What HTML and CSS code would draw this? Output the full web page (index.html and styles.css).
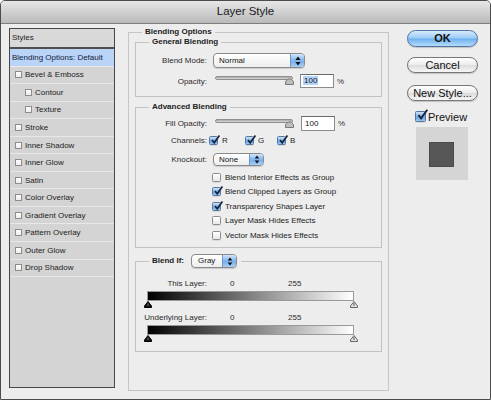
FILE: index.html
```html
<!DOCTYPE html>
<html>
<head>
<meta charset="utf-8">
<title>Layer Style</title>
<link rel="stylesheet" href="styles.css">
</head>
<body>
<div class="window">
  <div class="titlebar">Layer Style</div>
  <div class="content">
    <ul class="styles-list">
      <li class="styles-head">Styles</li>
      <li class="item selected">Blending Options: Default</li>
      <li class="item"><span class="sbox"></span>Bevel &amp; Emboss</li>
      <li class="item sub"><span class="sbox"></span>Contour</li>
      <li class="item sub"><span class="sbox"></span>Texture</li>
      <li class="item"><span class="sbox"></span>Stroke</li>
      <li class="item"><span class="sbox"></span>Inner Shadow</li>
      <li class="item"><span class="sbox"></span>Inner Glow</li>
      <li class="item"><span class="sbox"></span>Satin</li>
      <li class="item"><span class="sbox"></span>Color Overlay</li>
      <li class="item"><span class="sbox"></span>Gradient Overlay</li>
      <li class="item"><span class="sbox"></span>Pattern Overlay</li>
      <li class="item"><span class="sbox"></span>Outer Glow</li>
      <li class="item"><span class="sbox"></span>Drop Shadow</li>
    </ul>

    <div class="main">
      <fieldset class="group outer">
        <legend>Blending Options</legend>
        <div class="outer-body">
          <fieldset class="group general">
            <legend>General Blending</legend>
            <div class="row r-mode">
              <span class="lbl">Blend Mode:</span>
              <div class="popup p-mode"><span class="popup-text">Normal</span><span class="popup-arrows"><svg viewBox="0 0 6 10" width="6" height="10"><path d="M3 0.5 L5.6 4 L0.4 4 Z M3 9.5 L5.6 6 L0.4 6 Z" fill="#111"/></svg></span></div>
            </div>
            <div class="row r-opacity">
              <span class="lbl">Opacity:</span>
              <div class="slider">
                <div class="track"></div>
                <svg class="thumb" viewBox="0 0 9 8" width="9" height="8"><path d="M0.5 7.5 L0.5 4.5 Q4.5 -1 8.5 4.5 L8.5 7.5 Z" fill="#bdbdbd" stroke="#777" stroke-width="1"/></svg>
              </div>
              <div class="num"><span class="sel">100</span></div>
              <span class="pct">%</span>
            </div>
          </fieldset>

          <fieldset class="group advanced">
            <legend>Advanced Blending</legend>
            <div class="row r-fill">
              <span class="lbl">Fill Opacity:</span>
              <div class="slider">
                <div class="track"></div>
                <svg class="thumb" viewBox="0 0 9 8" width="9" height="8"><path d="M0.5 7.5 L0.5 4.5 Q4.5 -1 8.5 4.5 L8.5 7.5 Z" fill="#bdbdbd" stroke="#777" stroke-width="1"/></svg>
              </div>
              <div class="num num-fill"><span>100</span></div>
              <span class="pct">%</span>
            </div>
            <div class="row r-chan">
              <span class="lbl lbl-chan">Channels:</span>
              <span class="chan chan-r"><span class="cb on"><svg viewBox="0 0 10 10" width="10" height="10"><path d="M2 5 L4.2 7.8 L9.4 0.6" fill="none" stroke="#16253d" stroke-width="1.7"/></svg></span>R</span>
              <span class="chan chan-g"><span class="cb on"><svg viewBox="0 0 10 10" width="10" height="10"><path d="M2 5 L4.2 7.8 L9.4 0.6" fill="none" stroke="#16253d" stroke-width="1.7"/></svg></span>G</span>
              <span class="chan"><span class="cb on"><svg viewBox="0 0 10 10" width="10" height="10"><path d="M2 5 L4.2 7.8 L9.4 0.6" fill="none" stroke="#16253d" stroke-width="1.7"/></svg></span>B</span>
            </div>
            <div class="row r-knock">
              <span class="lbl">Knockout:</span>
              <div class="popup p-knock"><span class="popup-text">None</span><span class="popup-arrows"><svg viewBox="0 0 6 10" width="6" height="9"><path d="M3 0.5 L5.6 4 L0.4 4 Z M3 9.5 L5.6 6 L0.4 6 Z" fill="#111"/></svg></span></div>
            </div>
            <ul class="checks">
              <li><span class="cb"></span>Blend Interior Effects as Group</li>
              <li><span class="cb on"><svg viewBox="0 0 10 10" width="10" height="10"><path d="M2 5 L4.2 7.8 L9.4 0.6" fill="none" stroke="#16253d" stroke-width="1.7"/></svg></span>Blend Clipped Layers as Group</li>
              <li><span class="cb on"><svg viewBox="0 0 10 10" width="10" height="10"><path d="M2 5 L4.2 7.8 L9.4 0.6" fill="none" stroke="#16253d" stroke-width="1.7"/></svg></span>Transparency Shapes Layer</li>
              <li><span class="cb"></span>Layer Mask Hides Effects</li>
              <li><span class="cb"></span>Vector Mask Hides Effects</li>
            </ul>
          </fieldset>

          <fieldset class="group blendif">
            <legend class="bi-legend"><span class="bi-text">Blend If:</span><span class="popup p-gray"><span class="popup-text">Gray</span><span class="popup-arrows"><svg viewBox="0 0 6 10" width="6" height="9"><path d="M3 0.5 L5.6 4 L0.4 4 Z M3 9.5 L5.6 6 L0.4 6 Z" fill="#111"/></svg></span></span></legend>
            <div class="bl-row first"><span class="bl-lbl">This Layer:</span><span class="v0">0</span><span>255</span></div>
            <div class="bar"></div>
            <div class="thumbs">
              <svg viewBox="0 0 8 7" width="8" height="7"><path d="M4 0.5 L7.5 5 L7.5 6.5 L0.5 6.5 L0.5 5 Z" fill="#111" stroke="#000" stroke-width="1"/><path d="M4 2.5 L4 5" stroke="#777" stroke-width="1"/></svg>
              <svg viewBox="0 0 8 7" width="8" height="7"><path d="M4 0.5 L7.5 5 L7.5 6.5 L0.5 6.5 L0.5 5 Z" fill="#e4e4e4" stroke="#666" stroke-width="1"/><path d="M4 2.2 L4 5" stroke="#555" stroke-width="1"/></svg>
            </div>
            <div class="bl-row"><span class="bl-lbl">Underlying Layer:</span><span class="v0">0</span><span>255</span></div>
            <div class="bar"></div>
            <div class="thumbs">
              <svg viewBox="0 0 8 7" width="8" height="7"><path d="M4 0.5 L7.5 5 L7.5 6.5 L0.5 6.5 L0.5 5 Z" fill="#111" stroke="#000" stroke-width="1"/><path d="M4 2.5 L4 5" stroke="#777" stroke-width="1"/></svg>
              <svg viewBox="0 0 8 7" width="8" height="7"><path d="M4 0.5 L7.5 5 L7.5 6.5 L0.5 6.5 L0.5 5 Z" fill="#e4e4e4" stroke="#666" stroke-width="1"/><path d="M4 2.2 L4 5" stroke="#555" stroke-width="1"/></svg>
            </div>
          </fieldset>
        </div>
      </fieldset>
    </div>

    <div class="side">
      <div class="btn btn-ok">OK</div>
      <div class="btn btn-cancel">Cancel</div>
      <div class="btn btn-new">New Style...</div>
      <div class="preview-row"><span class="cb cb-big on"><svg viewBox="0 0 10 10" width="12" height="12"><path d="M2 5 L4.2 7.8 L9.4 0.6" fill="none" stroke="#16253d" stroke-width="1.6"/></svg></span>Preview</div>
      <div class="swatch"><div class="swatch-inner"></div></div>
    </div>
  </div>
</div>
</body>
</html>
```

FILE: styles.css
```css
* { box-sizing: border-box; }
html, body { margin: 0; padding: 0; background: #ffffff; }
body {
  font-family: "Liberation Sans", Arial, sans-serif;
  font-size: 8px;
  color: #1e1e1e;
}
.window {
  width: 491px;
  height: 400px;
  border: 1px solid #4c4c4c;
  border-radius: 5px 5px 0 0;
  background: #ededed;
  overflow: hidden;
  display: flex;
  flex-direction: column;
}
.titlebar {
  height: 23px;
  flex: none;
  background: linear-gradient(#e7e7e7, #bababa);
  border-bottom: 1px solid #7d7d7d;
  text-align: center;
  font-size: 11.5px;
  line-height: 21px;
  color: #1a1a1a;
}
.content {
  flex: 1;
  display: flex;
  align-items: flex-start;
  padding: 4px 0 0 8px;
}

/* Styles list */
.styles-list {
  list-style: none;
  margin: 0;
  padding: 0;
  width: 106px;
  height: 360px;
  flex: none;
  border: 1px solid #474747;
  background: #d4d4d4;
}
.styles-head {
  height: 20px;
  border-bottom: 2px solid #4f4f4f;
  padding-left: 2px;
  line-height: 18px;
  background: #d9d9d9;
}
.item {
  height: 17.55px;
  border-bottom: 1px solid #e8e8e8;
  display: flex;
  align-items: center;
  padding-left: 5px;
  color: #222;
}
.item.selected {
  background: #b9d4f7;
  padding-left: 2px;
  color: #12223c;
}
.item.sub { padding-left: 15px; }
.sbox {
  width: 7px;
  height: 7px;
  margin-right: 3px;
  border: 1px solid #8d8d8d;
  background: linear-gradient(#ffffff, #ececec);
  flex: none;
}

/* Main */
.main {
  margin-left: 13px;
  margin-top: -1px;
  width: 261px;
  flex: none;
}
.group {
  margin: 0;
  padding: 0;
  min-width: 0;
  border: 1px solid #c2c2c2;
}
.group > legend {
  margin-left: 13px;
  padding: 0 3px;
  font-weight: bold;
  line-height: 10px;
  color: #222;
}
.outer { height: 364px; border-color: #c6c6c6; }
.outer-body { padding: 0 6px; }
.general { padding: 6px 0 8px; }
.advanced { margin-top: 5px; padding: 4px 0 4.5px; }
.blendif { margin-top: 6px; padding: 11px 0 8px; }

.row { display: flex; align-items: center; }
.lbl {
  width: 71px;
  margin-right: 6px;
  text-align: right;
  color: #2a2a2a;
}
.r-mode { height: 15px; }
.r-opacity { height: 14px; margin-top: 6px; }
.r-fill { height: 15px; }
.r-chan { height: 14px; margin-top: 2px; }
.r-knock { height: 12px; margin-top: 6px; }

.popup {
  display: flex;
  height: 15px;
  border: 1px solid #8a8a8a;
  border-radius: 4px;
  background: linear-gradient(#ffffff, #eeeeee);
  box-shadow: 0 1px 1px rgba(0,0,0,0.15);
  overflow: hidden;
}
.popup-text { flex: 1; padding-left: 5px; line-height: 13px; color: #111; }
.popup-arrows {
  width: 14px;
  flex: none;
  display: flex;
  align-items: center;
  justify-content: center;
  border-left: 1px solid #6f93c2;
  background: linear-gradient(#d3e6fb, #78b0ec 55%, #a6cdf5);
}
.p-mode { width: 92px; }
.p-knock { width: 51px; height: 13px; }
.p-knock .popup-text { line-height: 11px; }
.p-gray { width: 46px; height: 14px; font-weight: normal; border-radius: 4px; }
.p-gray .popup-text { line-height: 12px; padding-left: 6px; }

.slider {
  position: relative;
  width: 78px;
  height: 14px;
  margin-left: 2px;
}
.track {
  margin-top: 2px;
  height: 4px;
  border-radius: 2px;
  border: 1px solid #8f8f8f;
  background: linear-gradient(#a9a9a9, #d8d8d8);
}
.thumb { position: absolute; left: 70px; top: 3px; }
.num {
  width: 34px;
  height: 14px;
  margin-left: 7px;
  border: 1px solid #8c8c8c;
  border-top-color: #6a6a6a;
  background: #ffffff;
  padding-left: 2px;
  line-height: 12px;
  color: #111;
}
.num-fill { height: 15px; margin-left: 8px; line-height: 13px; padding-left: 3px; }
.sel { background: #b4d3f8; padding: 0 1px; }
.pct { margin-left: 3px; color: #333; }

.cb {
  position: relative;
  width: 9px;
  height: 9px;
  flex: none;
  border: 1px solid #8b8b8b;
  border-radius: 1.5px;
  background: linear-gradient(#ffffff, #e8e8e8);
  box-shadow: 0 1px 0 rgba(0,0,0,0.08);
}
.cb.on {
  border-color: #5577a3;
  background: linear-gradient(#cfe2f8, #6ea6e3 60%, #9ac5f0);
}
.cb svg { position: absolute; left: 0; top: -2px; overflow: visible; }
.lbl-chan { margin-right: 2px; }
.chan { display: flex; align-items: center; }
.chan .cb { margin-right: 4px; }
.chan-r { width: 36px; }
.chan-g { width: 32px; }

.checks { list-style: none; margin: 5px 0 0; padding: 0; }
.checks li {
  height: 14.5px;
  display: flex;
  align-items: center;
  padding-left: 76px;
  color: #222;
}
.checks .cb { margin-right: 4px; }

.group > .bi-legend { display: flex; align-items: center; height: 14px; padding: 0 4px 0 3px; }
.bi-text { margin-right: 7px; }
.bl-row { display: flex; height: 10px; line-height: 10px; color: #2a2a2a; }
.bl-row + .bar { margin-top: 2px; }
.thumbs + .bl-row { margin-top: 4px; }
.bl-lbl { width: 71px; text-align: right; }
.v0 { width: 58px; margin-left: 23px; }
.bar {
  margin-left: 11px;
  width: 207px;
  height: 10px;
  border: 1px solid #9a9a9a;
  background: linear-gradient(to right, #000000, #ffffff);
}
.thumbs {
  display: flex;
  justify-content: space-between;
  width: 214px;
  height: 8px;
  margin-left: 8px;
}
.thumbs svg { display: block; }

/* Right column */
.side {
  margin-left: 18px;
  width: 71px;
  flex: none;
  display: flex;
  flex-direction: column;
}
.btn {
  height: 16px;
  border-radius: 9px;
  text-align: center;
  font-size: 11px;
  line-height: 14px;
  color: #111;
  border: 1px solid #777;
  background: linear-gradient(#ffffff, #ececec 50%, #dcdcdc 51%, #f6f6f6);
  box-shadow: 0 1px 1px rgba(0,0,0,0.18);
}
.btn-ok {
  margin-top: 2px;
  height: 17px;
  line-height: 15px;
  font-weight: bold;
  border-color: #4f73a3;
  background: linear-gradient(#d5eafc, #9ccbf5 48%, #6cb0ef 52%, #b4dcfc);
}
.btn-cancel { margin-top: 10px; }
.btn-new { margin-top: 12px; }
.preview-row {
  margin-top: 10px;
  margin-left: 8px;
  height: 11px;
  display: flex;
  align-items: center;
  font-size: 11px;
  color: #111;
}
.cb-big { width: 11px; height: 11px; margin-right: 2px; }
.cb-big svg { left: 0; top: -3px; }
.swatch {
  margin-top: 5px;
  margin-left: 9px;
  width: 52px;
  height: 53px;
  background: #d5d5d5;
  padding: 15px 0 0 13px;
}
.swatch-inner {
  width: 25px;
  height: 25px;
  background: #575757;
  border: 1px solid #4a4a4a;
}
```
